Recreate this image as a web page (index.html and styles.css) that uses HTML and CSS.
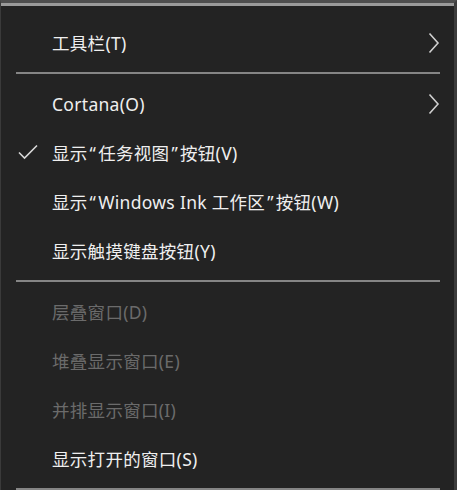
FILE: index.html
```html
<!DOCTYPE html>
<html lang="zh-CN">
<head>
  <meta charset="UTF-8">
  <title>任务栏菜单</title>
  <link rel="stylesheet" href="styles.css">
</head>
<body>

  <div class="menu">
    <div class="item">
      <span class="check"></span>
      <span class="text">工具栏(T)</span>
      <svg class="arrow" width="12" height="22" viewBox="0 0 12 22"><path d="M1.5 1.5 L10 11 L1.5 20.5" fill="none" stroke="#d0d0d0" stroke-width="1.6"/></svg>
    </div>

    <div class="sep"></div>

    <div class="item">
      <span class="check"></span>
      <span class="text">Cortana(O)</span>
      <svg class="arrow" width="12" height="22" viewBox="0 0 12 22"><path d="M1.5 1.5 L10 11 L1.5 20.5" fill="none" stroke="#d0d0d0" stroke-width="1.6"/></svg>
    </div>
    <div class="item">
      <span class="check">
        <svg width="20" height="16" viewBox="0 0 20 16"><path d="M1 8.5 L6.5 14 L19 1.5" fill="none" stroke="#d8d8d8" stroke-width="1.6"/></svg>
      </span>
      <span class="text">显示<span class="q">“</span>任务视图<span class="q">”</span>按钮(V)</span>
    </div>
    <div class="item">
      <span class="check"></span>
      <span class="text">显示<span class="q">“</span>Windows Ink 工作区<span class="q">”</span>按钮(W)</span>
    </div>
    <div class="item">
      <span class="check"></span>
      <span class="text">显示触摸键盘按钮(Y)</span>
    </div>

    <div class="sep"></div>

    <div class="item disabled">
      <span class="check"></span>
      <span class="text">层叠窗口(D)</span>
    </div>
    <div class="item disabled">
      <span class="check"></span>
      <span class="text">堆叠显示窗口(E)</span>
    </div>
    <div class="item disabled">
      <span class="check"></span>
      <span class="text">并排显示窗口(I)</span>
    </div>
    <div class="item">
      <span class="check"></span>
      <span class="text">显示打开的窗口(S)</span>
    </div>

    <div class="sep"></div>
  </div>

</body>
</html>
```

FILE: styles.css
```css
body {
  margin: 0;
  background: #232323;
  font-family: "Noto Sans", "Noto Sans CJK SC", sans-serif;
  overflow: hidden;
}

.menu {
  width: 453px;
  min-height: 487px;
  background: #232323;
  border-top: 3px solid #4e4e4e;
  border-left: 1px solid #3a3a3a;
  border-right: 3px solid #3c3c3c;
  box-shadow: inset 0 3px 0 #9a9a9a;
  padding-top: 15px;
}

.item {
  display: flex;
  align-items: center;
  height: 49px;
  color: #efefef;
  font-size: 17.5px;
  letter-spacing: 0.3px;
  padding-right: 14px;
}

.item.disabled {
  color: #6b6b6b;
}

.check {
  width: 51px;
  flex-shrink: 0;
  padding-left: 17px;
  box-sizing: border-box;
}

.check svg {
  display: block;
  margin-bottom: 2px;
}

.text {
  flex: 1;
  white-space: nowrap;
}

/* Anführungszeichen etwas breiter, wie im Original */
.q {
  padding: 0 2px;
}

.arrow {
  display: block;
}

.sep {
  height: 2px;
  background: #858585;
  margin: 5px 14px 5px 15px;
}
```
